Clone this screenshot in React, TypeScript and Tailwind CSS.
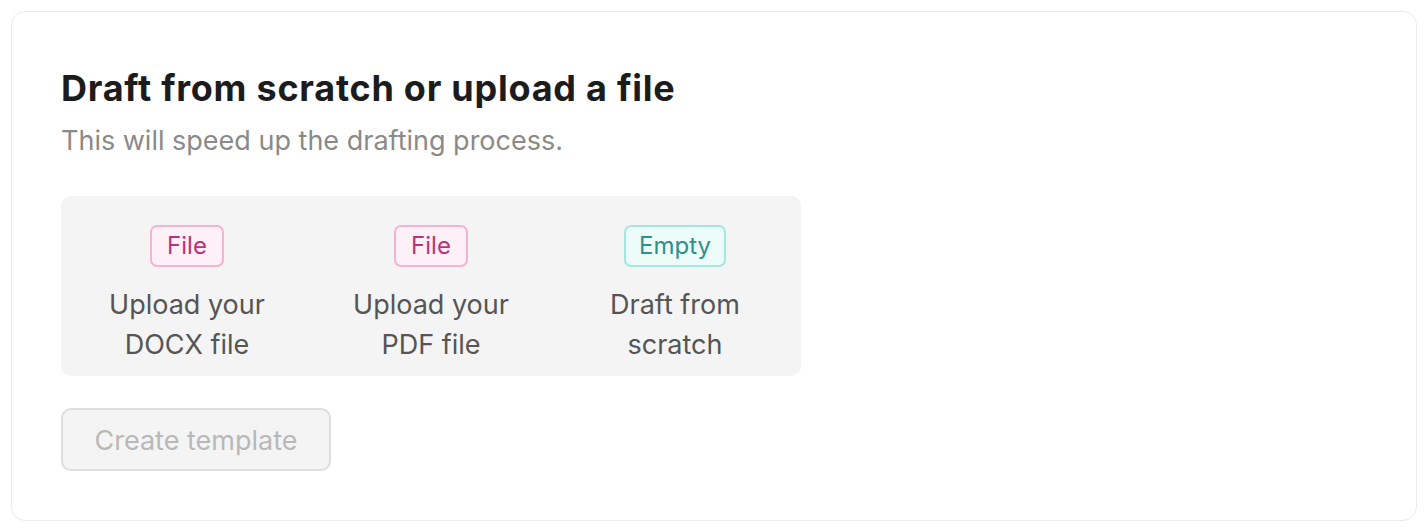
import React from 'react';

const options = [
  { tag: 'File', tone: 'pink', lines: ['Upload your', 'DOCX file'] },
  { tag: 'File', tone: 'pink', lines: ['Upload your', 'PDF file'] },
  { tag: 'Empty', tone: 'teal', lines: ['Draft from', 'scratch'] },
];

export default function App() {
  return (
    <div className="min-h-screen bg-white p-[11px] font-['Inter',sans-serif]">
      <div className="h-[510px] rounded-[14px] border border-[#ebebeb] bg-white px-[49px] pt-[54px]">
        <h1 className="text-[36px] font-bold leading-[44px] tracking-[0.75px] text-[#1c1c1c]">
          Draft from scratch or upload a file
        </h1>
        <p className="mt-[13px] text-[27px] leading-[36px] text-[#8a8a8a]">
          This will speed up the drafting process.
        </p>

        <div className="mt-[37px] grid w-[740px] grid-cols-3 rounded-[10px] bg-[#f4f4f4] px-[4px] pt-[29px] pb-[11px]">
          {options.map((o, i) => (
            <div key={i} className="flex flex-col items-center">
              <span
                className={
                  o.tone === 'pink'
                    ? 'flex h-[42px] items-center rounded-[7px] border-2 border-[#f6b3d1] bg-[#fdf0f6] px-[15px] text-[24px] text-[#bf2f7c]'
                    : 'flex h-[42px] items-center rounded-[7px] border-2 border-[#a3e8df] bg-[#ebfcf9] px-[13px] text-[24px] text-[#2f8f8b]'
                }
              >
                {o.tag}
              </span>
              <div className="mt-[18px] text-center text-[27px] leading-[40px] text-[#555555]">
                {o.lines.map((l) => (
                  <div key={l}>{l}</div>
                ))}
              </div>
            </div>
          ))}
        </div>

        <button
          type="button"
          disabled
          className="mt-[32px] h-[63px] w-[270px] rounded-[10px] border-2 border-[#dedede] bg-[#f4f4f4] pt-[4px] text-[27px] text-[#b8b8b8]"
        >
          Create template
        </button>
      </div>
    </div>
  );
}
